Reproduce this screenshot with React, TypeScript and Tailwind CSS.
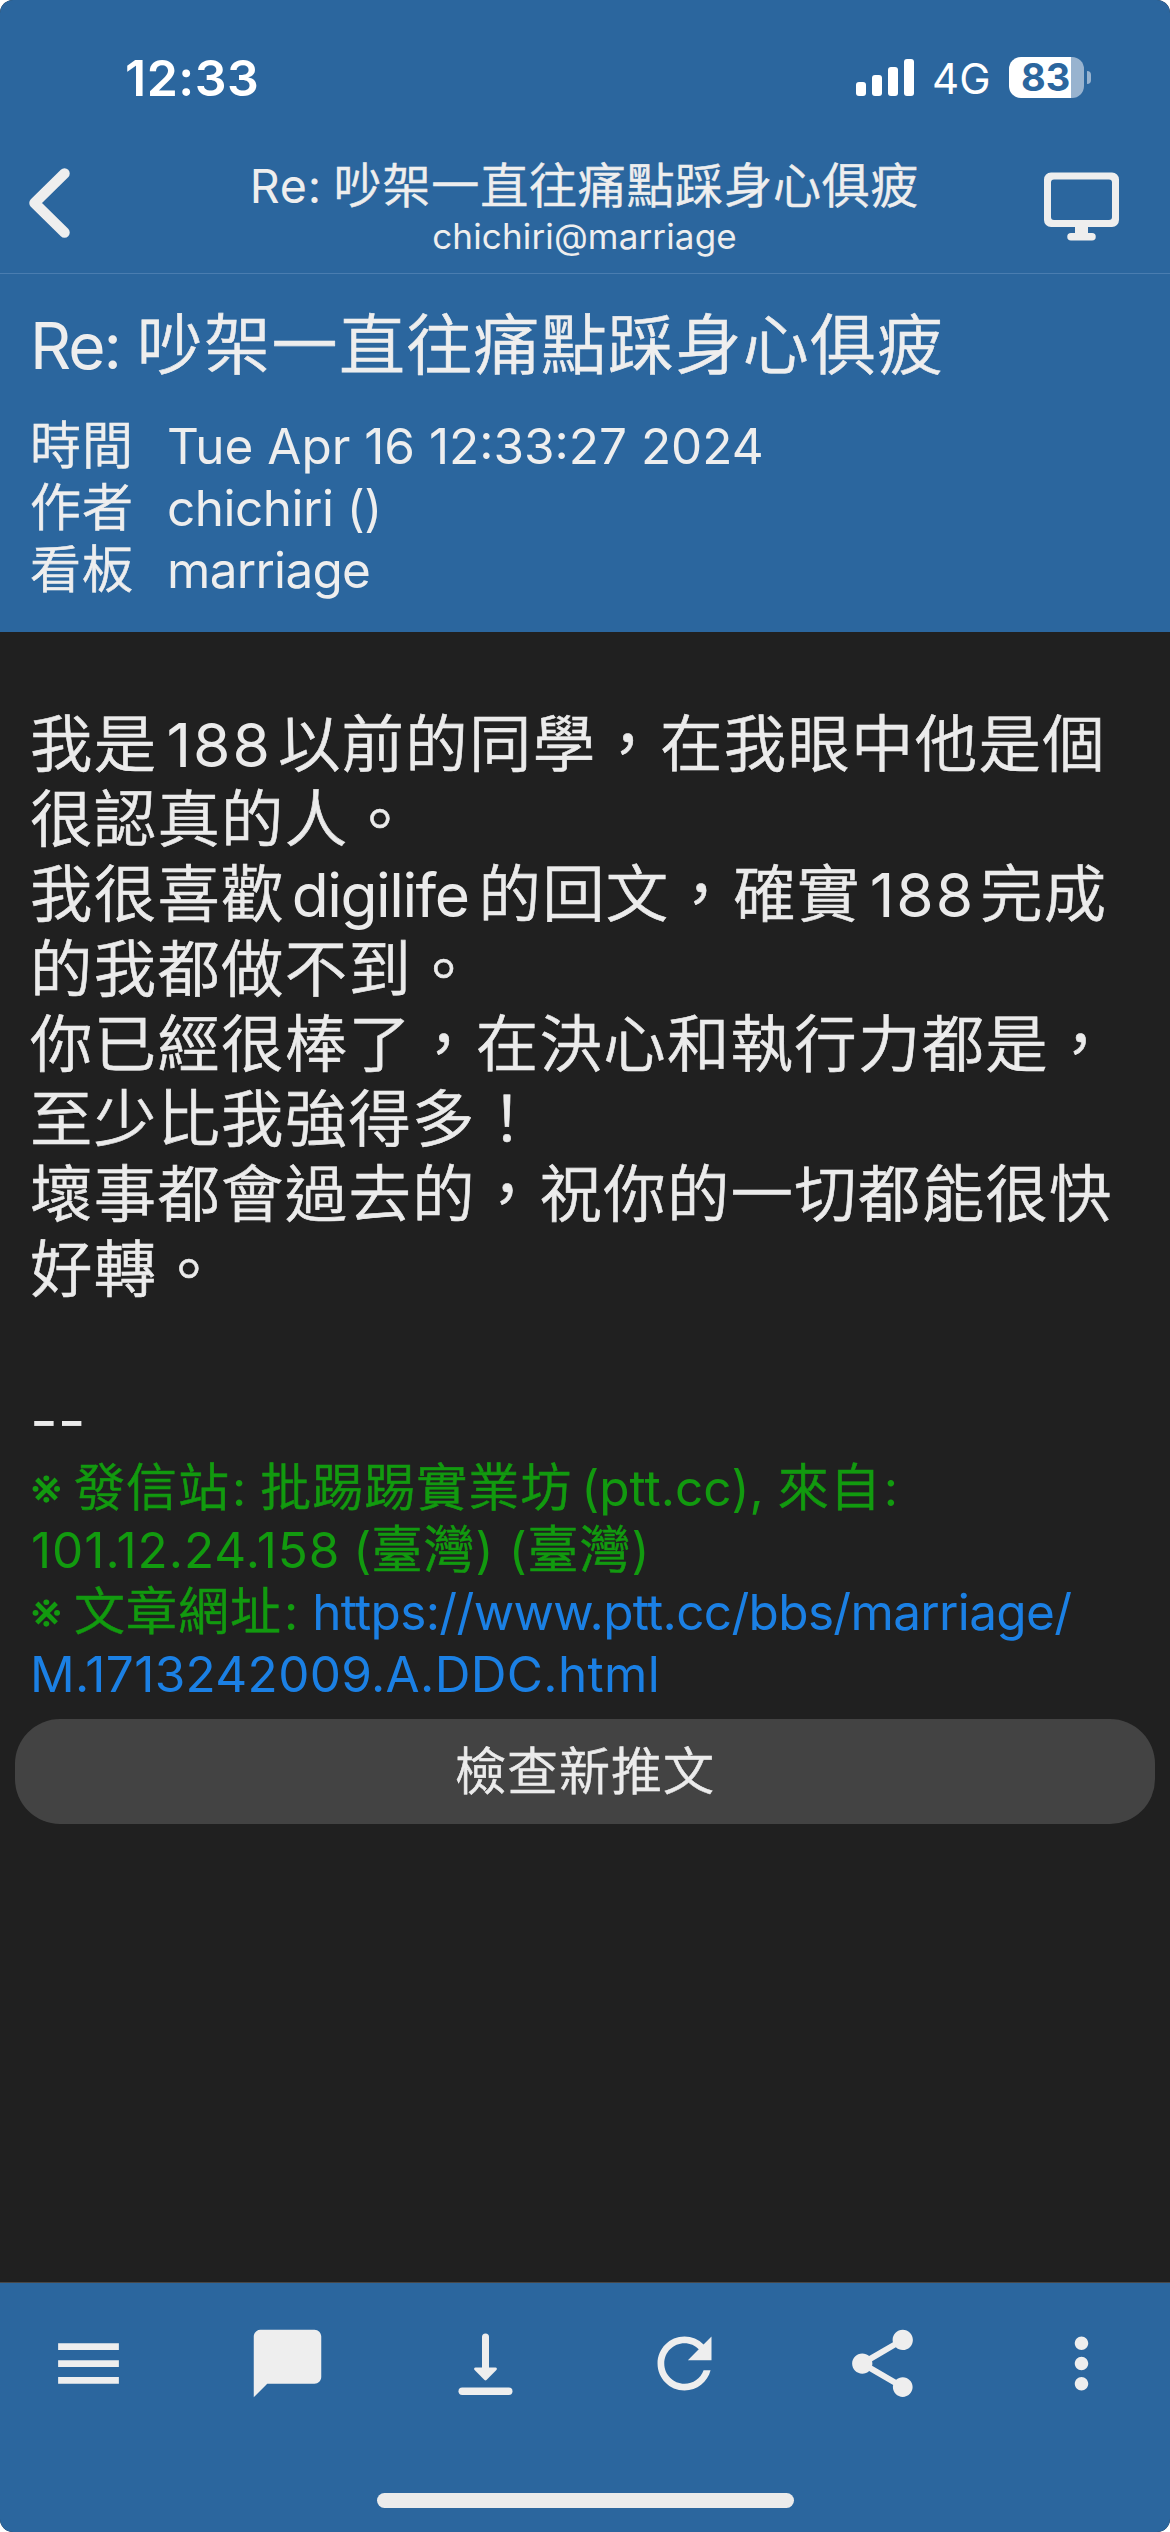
import type { ReactNode } from "react";
import {
  MdChatBubble,
  MdMenu,
  MdMoreVert,
  MdRefresh,
  MdShare,
} from "react-icons/md";

// Latin runs sit slightly smaller than the CJK text around them
function Latin({
  className = "",
  children,
}: {
  className?: string;
  children: ReactNode;
}) {
  return (
    <span
      className={`leading-none font-normal text-[0.97em] [-webkit-text-stroke:0] ${className}`}
    >
      {children}
    </span>
  );
}

function StatusBar() {
  return (
    <div className="flex h-[140px] items-start justify-between pt-12 pr-[79px] pl-[125px] text-white [-webkit-text-stroke:0]">
      <span className="text-[50px] leading-[60px] font-semibold tracking-[0.5px]">
        12:33
      </span>
      <div className="flex items-start">
        <div className="mt-[11px] flex h-[37px] items-end gap-[6px]">
          <span className="h-[14px] w-[10px] rounded-[3px] bg-white" />
          <span className="h-[21px] w-[10px] rounded-[3px] bg-white" />
          <span className="h-[29px] w-[10px] rounded-[3px] bg-white" />
          <span className="h-[37px] w-[10px] rounded-[3px] bg-white" />
        </div>
        <span className="mt-px ml-[18px] w-[77px] text-[42px] leading-[60px] font-normal">
          4G
        </span>
        <div className="mt-[9px] flex items-center">
          <div className="h-[41px] w-[75px] rounded-[12px] bg-[linear-gradient(to_right,#fff_62px,#98b3cf_62px)] pl-[12px] text-[38px] leading-[41px] font-bold text-[#2b669e]">
            83
          </div>
          <span className="ml-[3px] h-[13px] w-[4px] rounded-r-full bg-[#98b3cf]" />
        </div>
      </div>
    </div>
  );
}

function NavBar() {
  return (
    <div className="flex h-[134px] items-start justify-between border-b border-[#4a7db0] pr-[51px] pl-[29px]">
      <svg
        className="mt-[28px] h-[70px] w-[41px]"
        viewBox="0 0 41 70"
        fill="none"
        stroke="#eee"
        strokeWidth="10.5"
        strokeLinecap="round"
        strokeLinejoin="round"
      >
        <path d="M35.5 5.5 5.5 35l30 29.5" />
      </svg>
      <div className="mt-[17px] ml-[55px] text-center">
        <h1 className="text-[48px] leading-[57px] tracking-[0.8px]">
          <Latin className="mr-[-2px] tracking-[0.8px]">Re: </Latin>
          吵架一直往痛點踩身心俱疲
        </h1>
        <p className="text-[35px] leading-[44px] font-normal tracking-[0.15px] [-webkit-text-stroke:0]">
          chichiri@marriage
        </p>
      </div>
      <svg
        className="mt-[32px] h-[69px] w-[75px]"
        viewBox="0 0 75 69"
        fill="#eee"
      >
        <path
          fillRule="evenodd"
          d="M7 0.5h61a7 7 0 0 1 7 7V48a7 7 0 0 1-7 7H7a7 7 0 0 1-7-7V7.5a7 7 0 0 1 7-7zM10 7.5a3 3 0 0 0-3 3V45a3 3 0 0 0 3 3h55a3 3 0 0 0 3-3V10.5a3 3 0 0 0-3-3z"
        />
        <path d="M31 54h13v7h4a3.5 3.5 0 0 1 0 7.500H27a3.500 3.500 0 0 1 0-7.500h4z" />
      </svg>
    </div>
  );
}

function ArticleInfo() {
  const rows = [
    {
      label: "時間",
      value: "Tue Apr 16 12:33:27 2024",
      spacing: "tracking-normal",
    },
    { label: "作者", value: "chichiri ()", spacing: "tracking-[-0.5px]" },
    { label: "看板", value: "marriage", spacing: "tracking-[-0.7px]" },
  ];

  return (
    <section className="h-[358px] px-[30px] pt-[31px]">
      <h2 className="text-[66px] leading-[80px] tracking-[1.3px]">
        <Latin className="mr-px tracking-[-2px]">Re: </Latin>
        吵架一直往痛點踩身心俱疲
      </h2>
      <dl className="mt-[30px]">
        {rows.map((row) => (
          <div
            key={row.label}
            className="flex text-[51px] leading-[62px] tracking-[1px]"
          >
            <dt className="w-[137px]">{row.label}</dt>
            <dd>
              <Latin className={row.spacing}>{row.value}</Latin>
            </dd>
          </div>
        ))}
      </dl>
    </section>
  );
}

function ArticleBody() {
  return (
    <div className="px-[30px] pt-[75px] text-[62.4px] leading-[75px] tracking-[1.3px] whitespace-nowrap text-[#ebebeb]">
      <p>
        我是<Latin className="mr-[6px] ml-[9px] tracking-[2px]">188</Latin>
        以前的同學，在我眼中他是個
      </p>
      <p>很認真的人。</p>
      <p>
        我很喜歡
        <Latin className="mr-[10px] ml-[7px] tracking-[-1.5px]">digilife</Latin>
        的回文，確實
        <Latin className="mr-[5px] ml-[9px] tracking-[2px]">188</Latin>
        完成
      </p>
      <p>的我都做不到。</p>
      <p>你已經很棒了，在決心和執行力都是，</p>
      <p>至少比我強得多！</p>
      <p>壞事都會過去的，祝你的一切都能很快</p>
      <p>好轉。</p>
      <p>&nbsp;</p>
      <p>
        <Latin className="tracking-normal">--</Latin>
      </p>
    </div>
  );
}

function Signature() {
  return (
    <div className="px-[30px] text-[51px] leading-[62px] tracking-[1px] whitespace-nowrap text-[#129a0f]">
      <p>
        <span className="mr-[-5px] font-normal [-webkit-text-stroke:0]">
          ※{" "}
        </span>
        發信站<Latin className="ml-[2px] tracking-normal">: </Latin>
        批踢踢實業坊
        <Latin className="ml-[9px] tracking-normal">(ptt.cc), </Latin>
        來自<Latin className="ml-[2px]">:</Latin>
      </p>
      <p>
        <Latin className="mr-[-2px] ml-px tracking-[1px]">101.12.24.158 </Latin>
        <Latin className="tracking-normal">(</Latin>臺灣
        <Latin className="tracking-[0.7px]">) (</Latin>臺灣
        <Latin>)</Latin>
      </p>
      <p>
        <span className="mr-[-5px] font-normal [-webkit-text-stroke:0]">
          ※{" "}
        </span>
        文章網址<Latin className="ml-[2px] tracking-normal">: </Latin>
        <a className="text-[#1b80e4]">
          <Latin className="tracking-[-0.65px]">
            https://www.ptt.cc/bbs/marriage/
          </Latin>
        </a>
      </p>
      <p>
        <a className="text-[#1b80e4]">
          <Latin className="tracking-[0.35px]">M.1713242009.A.DDC.html</Latin>
        </a>
      </p>
    </div>
  );
}

function DownloadIcon() {
  return (
    <svg className="size-[81px]" viewBox="0 0 81 81" fill="#eee">
      <rect x="37" y="10.5" width="7" height="40" rx="3.5" />
      <path d="M30.5 44.5h20c1.5 0 1.8 1.5.9 2.5L41.5 57c-.6.6-1.400.6-2 0l-9.900-10c-.9-1-.6-2.500.9-2.500z" />
      <rect x="13.5" y="64.5" width="54" height="7.5" rx="3.7" />
    </svg>
  );
}

function Toolbar() {
  return (
    <footer className="flex h-[250px] flex-col items-center justify-between border-t border-[#474747] bg-[#2b669e] pb-6">
      <div className="flex w-full justify-between px-[48px] pt-[40px] text-[#eee]">
        <MdMenu className="size-[81px]" />
        <MdChatBubble className="size-[81px]" />
        <DownloadIcon />
        <MdRefresh className="size-[81px]" />
        <MdShare className="size-[81px]" />
        <MdMoreVert className="size-[81px]" />
      </div>
      <div className="h-[15px] w-[417px] rounded-full bg-[#ebebeb]" />
    </footer>
  );
}

export default function App() {
  return (
    <div className="h-[2532px] w-[1170px] bg-white">
      <div className="flex h-full flex-col overflow-hidden rounded-[13px] bg-[#202020] font-['Inter','Noto_Sans_CJK_TC',sans-serif] font-[350] text-[#eee] [-webkit-text-stroke:0.6px]">
        <header className="bg-[#2b669e]">
          <StatusBar />
          <NavBar />
          <ArticleInfo />
        </header>
        <main className="flex-1">
          <ArticleBody />
          <Signature />
          <div className="px-[15px] pt-[14px]">
            <button className="block h-[105px] w-full rounded-[45px] bg-[#434343] text-[51px] leading-[105px] tracking-[1px] text-[#ebebeb]">
              檢查新推文
            </button>
          </div>
        </main>
        <Toolbar />
      </div>
    </div>
  );
}
